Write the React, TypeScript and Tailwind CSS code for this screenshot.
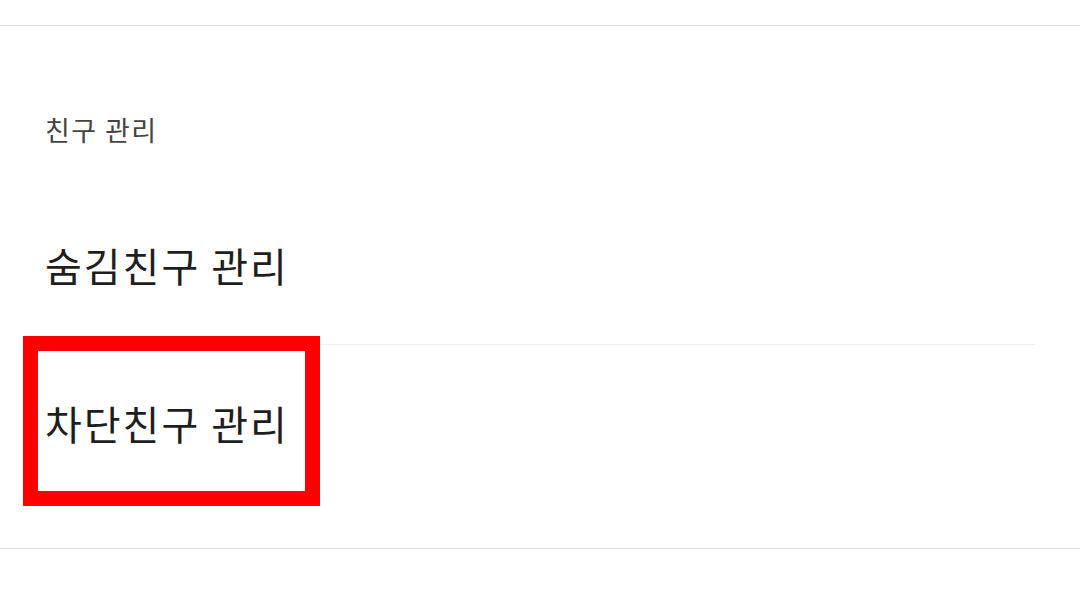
import React from 'react';

const font = {
  fontFamily: '"Noto Sans CJK KR", "Noto Sans", sans-serif',
};

const items = ['숨김친구 관리', '차단친구 관리'];

export default function App() {
  return (
    <div className="relative w-[1080px] h-[608px] bg-white overflow-hidden" style={font}>
      <div className="h-[25px]" />
      <div className="h-px bg-[#dcdcdc]" />
      <div className="h-[76px]" />
      <div className="px-[45px] h-[56px] flex items-center text-[27px] tracking-[1.4px] text-[#444444]">
        친구 관리
      </div>
      <div className="pl-[45px] pr-[45px]">
        <div className="h-[187px] flex items-center pt-[28px] text-[40px] tracking-[2px] text-[#1e1e1e] border-b border-[#efefef]">
          {items[0]}
        </div>
        <div className="h-[161px] flex items-center pb-[5px] text-[40px] tracking-[2px] text-[#1e1e1e]">
          {items[1]}
        </div>
      </div>
      <div className="h-[42px]" />
      <div className="h-px bg-[#dcdcdc]" />

      <div className="absolute left-[23px] top-[336px] w-[297px] h-[170px] border-[15px] border-[#ff0000]" />
    </div>
  );
}
